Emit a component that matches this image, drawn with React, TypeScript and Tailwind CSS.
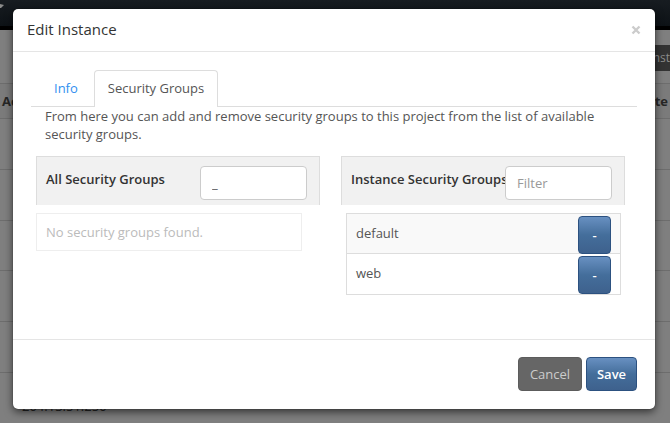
import { useState } from "react";

const rowHeights = ["h-[51px]", "h-[51px]", "h-[50px]", "h-[51px]", "h-[51px]"];

function Backdrop() {
  return (
    <div className="min-h-screen bg-[#7f7f7f]">
      <div className="flex h-[30px] items-start border-b-4 border-black bg-linear-to-b from-[#171c21] to-[#0d1216]">
        <svg className="h-2 w-4" viewBox="0 0 16 8" aria-hidden="true">
          <path d="M0 4 4 5 1 8 0 8Z" fill="#8b8b8b" />
        </svg>
      </div>
      <div className="flex h-[53px] justify-end pt-[15px]">
        <button className="h-[26px] w-6 overflow-hidden bg-[#333333] text-right text-[12px] whitespace-nowrap text-[#8c8c8c]">
          Inst
        </button>
      </div>
      <table className="w-full border-collapse">
        <thead>
          <tr className="h-[35px] border-y border-[#6d6d6d] bg-[#7b7b7b] text-[#262626]">
            <th className="pl-0.5 text-left font-bold">Ac</th>
            <th className="pr-0.5 text-right font-bold">ate</th>
          </tr>
        </thead>
        <tbody>
          {rowHeights.map((height, index) => (
            <tr key={index} className={`${height} border-b border-[#6d6d6d]`}>
              <td colSpan={2} />
            </tr>
          ))}
          <tr className="h-[50px] align-bottom">
            <td colSpan={2} className="pb-2 pl-[22px] text-[#262626]">
              204.13.51.250
            </td>
          </tr>
        </tbody>
      </table>
    </div>
  );
}

function GroupHeading({
  id,
  title,
  value,
  onChange,
}: {
  id: string;
  title: string;
  value: string;
  onChange: (value: string) => void;
}) {
  return (
    <div className="flex h-[49px] items-start justify-between border border-b-0 border-[#dddddd] bg-[#f1f1f1] pt-[9px] pr-3 pl-[9px]">
      <label htmlFor={id} className="min-w-0 flex-1 pt-1 font-semibold whitespace-nowrap text-[#333333]">
        {title}
      </label>
      <input
        id={id}
        placeholder="Filter"
        value={value}
        onChange={(event) => onChange(event.target.value)}
        className="h-[34px] w-[107px] shrink-0 rounded-[4px] border border-[#cccccc] bg-white px-[11px] text-[13px] text-[#555555] outline-none placeholder:text-[#999999]"
      />
    </div>
  );
}

const blueButton =
  "rounded-[4px] border border-[#2c5180] bg-linear-to-b from-[#6890c1] via-[#446e9b] to-[#3e618d] font-semibold text-white";

export default function App() {
  const [available, setAvailable] = useState("_");
  const [filter, setFilter] = useState("");

  return (
    <div className="relative h-screen overflow-hidden font-['Open_Sans','Noto_Sans',sans-serif] text-[13px] leading-[18px] text-[#555555]">
      <Backdrop />
      <div className="absolute inset-0 pt-[9px] pr-[15px] pl-[13px]">
        <section
          role="dialog"
          aria-labelledby="dialog-title"
          className="rounded-[5px] bg-white shadow-[0_3px_9px_rgba(0,0,0,0.6),0_0_1px_rgba(0,0,0,0.8)]"
        >
          <header className="flex h-[43px] items-center justify-between border-b border-[#e5e5e5] pr-3.5 pl-3.5">
            <h1 id="dialog-title" className="pb-0.5 text-[15px] text-[#333333]">
              Edit Instance
            </h1>
            <button aria-label="Close" className="text-[#cccccc]">
              <svg width="10" height="10" viewBox="0 0 10 10" aria-hidden="true">
                <path d="m1.5 1.5 7 7m0-7-7 7" stroke="currentColor" strokeWidth="2.4" />
              </svg>
            </button>
          </header>

          <div className="h-[287px] px-[18px] pt-[18px]">
            <nav className="flex h-[37px] border-b border-[#dddddd]">
              <a href="#info" className="w-[63px] pt-[9px] pl-[23px] text-[#2f8ff0]">
                Info
              </a>
              <a
                href="#security-groups"
                aria-current="page"
                className="-mb-px w-[124px] rounded-t-[4px] border border-b-0 border-[#dddddd] bg-white pt-2 text-center"
              >
                Security Groups
              </a>
            </nav>
            <p className="pr-5 pl-3.5">
              From here you can add and remove security groups to this project from the list of
              available security groups.
            </p>
            <div className="grid grid-cols-2 gap-[21px] pt-[13px] pr-3 pl-[5px]">
              <div>
                <GroupHeading
                  id="all-groups"
                  title="All Security Groups"
                  value={available}
                  onChange={setAvailable}
                />
                <p className="mt-2 mr-[18px] h-[38px] border border-[#eeeeee] pt-[9px] pl-[9px] text-[#bbbbbb]">
                  No security groups found.
                </p>
              </div>
              <div>
                <GroupHeading
                  id="instance-groups"
                  title="Instance Security Groups"
                  value={filter}
                  onChange={setFilter}
                />
                <ul className="mt-2 mr-1 ml-[5px] border border-b-0 border-[#dddddd]">
                  {["default", "web"].map((name) => (
                    <li
                      key={name}
                      className="flex h-10 items-start justify-between border-b border-[#dddddd] pt-0.5 pr-[9px] pl-[9px] odd:bg-[#f9f9f9] even:h-[41px]"
                    >
                      <span className="pt-2">{name}</span>
                      <button aria-label={`Remove ${name}`} className={`${blueButton} h-[38px] w-[33px]`}>
                        -
                      </button>
                    </li>
                  ))}
                </ul>
              </div>
            </div>
          </div>

          <footer className="flex h-[70px] justify-end gap-1 border-t border-[#e5e5e5] pt-[17px] pr-[18px]">
            <button className="h-[34px] w-16 rounded-[4px] border border-[#5c5c5c] bg-[#666666] text-[#cccccc]">
              Cancel
            </button>
            <button className={`${blueButton} h-[34px] w-[51px]`}>Save</button>
          </footer>
        </section>
      </div>
    </div>
  );
}
